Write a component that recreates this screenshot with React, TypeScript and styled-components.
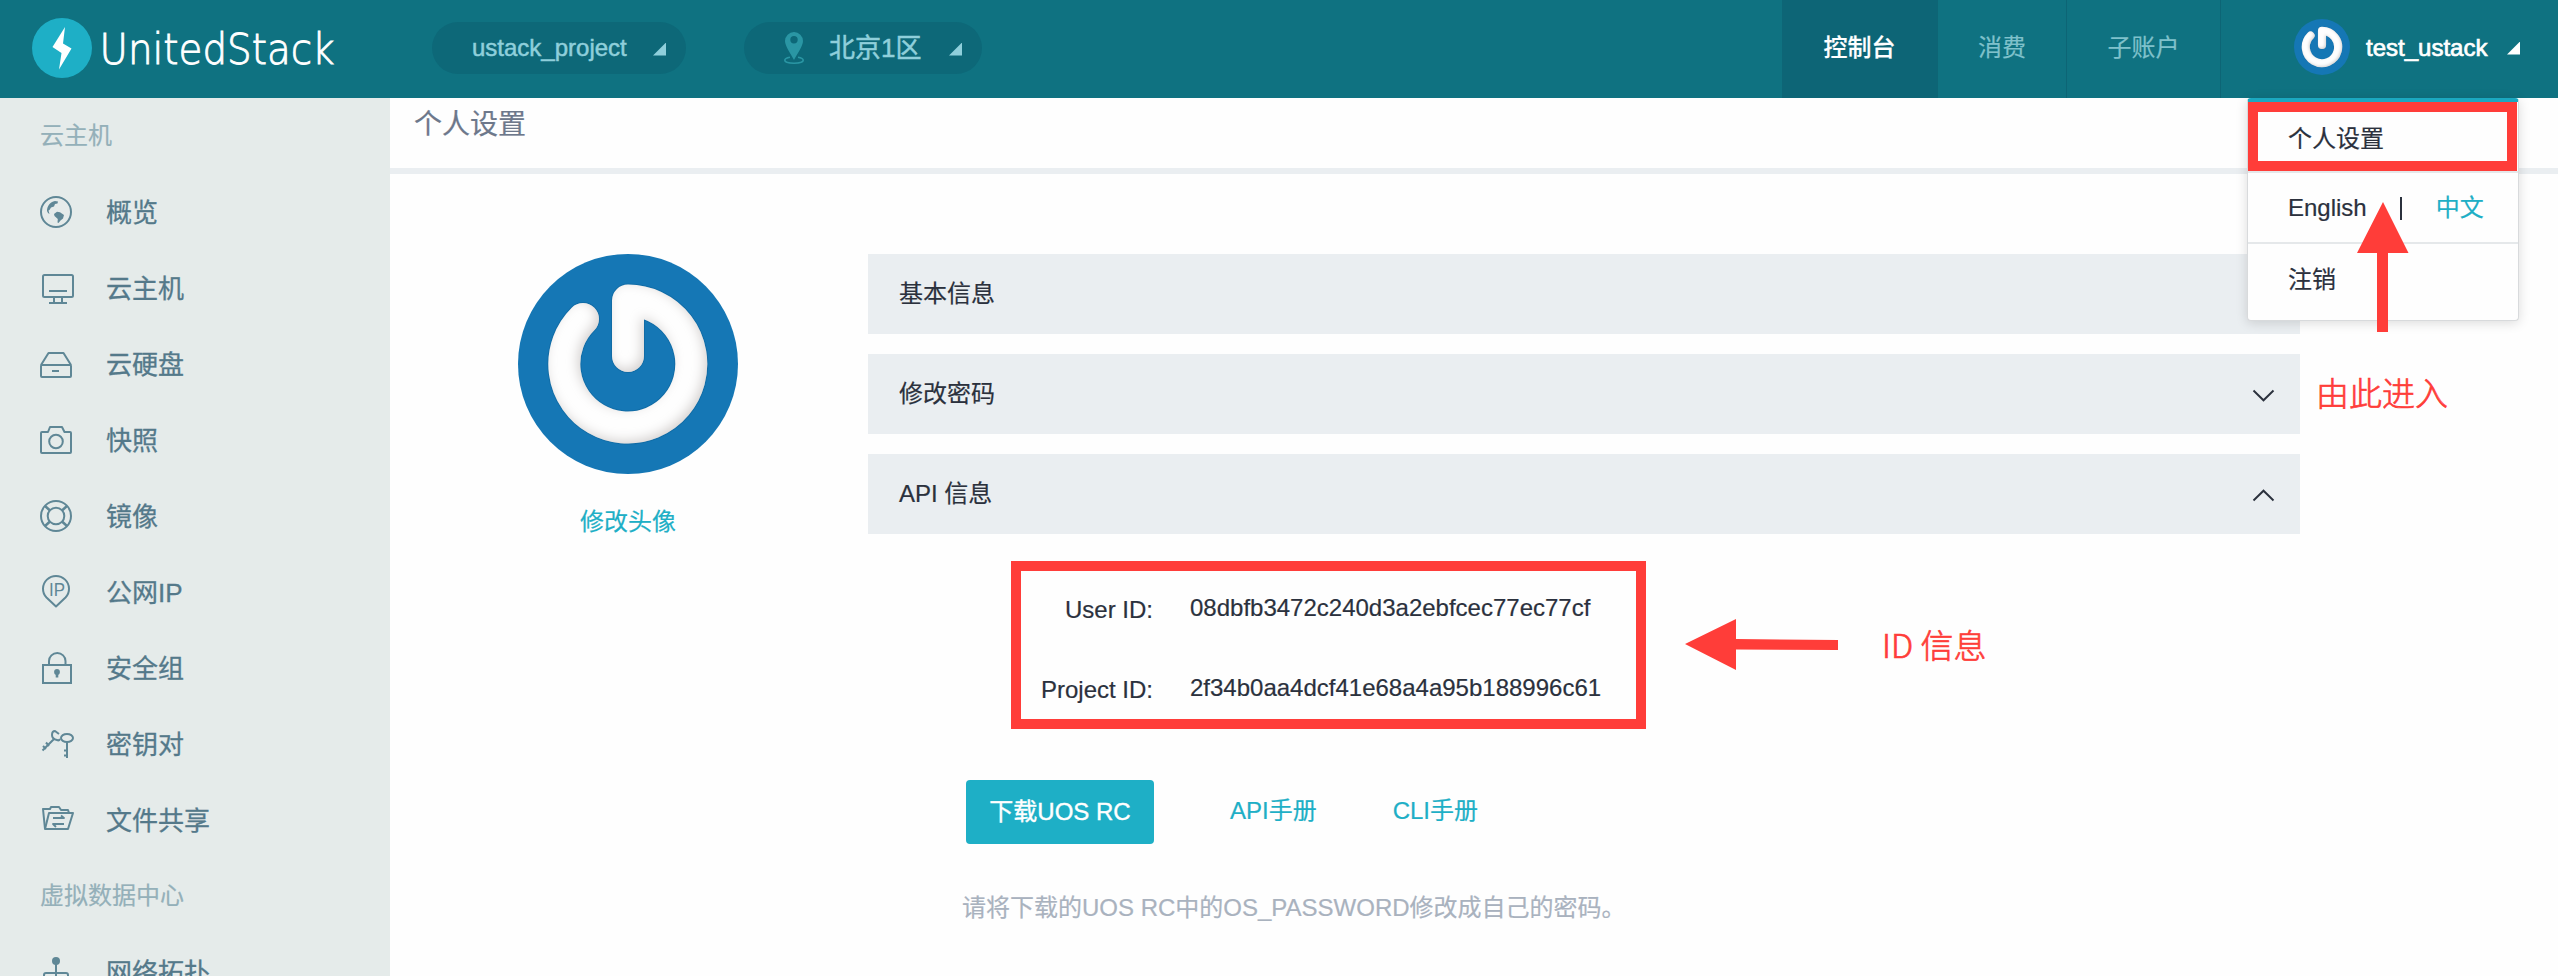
import React from "react";
import styled, { createGlobalStyle, css } from "styled-components";

const GlobalStyle = createGlobalStyle`
  * { box-sizing: border-box; }
  body {
    margin: 0;
    background: #fefefe;
    font-family: "Liberation Sans", "Noto Sans CJK SC", sans-serif;
    font-size: 24px;
    color: #2b313d;
    -webkit-text-stroke: 0.2px currentColor;
    -webkit-font-smoothing: antialiased;
  }
`;

const RED = "#ff3d39";
const TEAL = "#1eafc6";

const Page = styled.div`
  position: relative;
  display: flex;
  flex-direction: column;
  width: 2558px;
  height: 976px;
  overflow: hidden;
`;

/* ---------- header ---------- */

const Header = styled.header`
  display: flex;
  flex: none;
  height: 98px;
  padding-left: 32px;
  background: #0f7281;
`;

const Brand = styled.div`
  display: flex;
  align-items: center;
  width: 400px;
  padding-bottom: 2px;
`;

const Wordmark = styled.svg`
  display: block;
  margin-left: 8px;
  overflow: visible;
`;

const Pill = styled.button<{ $width: number; $pad: number }>`
  display: flex;
  align-items: center;
  width: ${(p) => p.$width}px;
  height: 52px;
  margin: 22px 58px 0 0;
  padding: 0 20px 0 ${(p) => p.$pad}px;
  border: 0;
  border-radius: 26px;
  background: #0d6878;
  color: #8fcfdb;
  font: inherit;
`;

const PillText = styled.span<{ $size?: number }>`
  flex: 1;
  text-align: left;
  font-size: ${(p) => p.$size ?? 24}px;
  line-height: 48px;
  padding-bottom: 1px;
  white-space: nowrap;
  -webkit-text-stroke: 0.5px currentColor;
`;

const Corner = styled.i<{ $white?: boolean }>`
  width: 13px;
  height: 13px;
  margin-top: 2px;
  background: ${(p) => (p.$white ? "#fff" : "#8fcfdb")};
  clip-path: polygon(100% 0, 100% 100%, 0 100%);
`;

const PinIcon = styled.svg`
  display: block;
  margin-right: 25px;
`;

const Nav = styled.nav`
  display: flex;
  margin-left: auto;
`;

const NavItem = styled.a<{ $width: number; $active?: boolean }>`
  width: ${(p) => p.$width}px;
  line-height: 96px;
  text-align: center;
  color: #7fc1cb;
  border-right: 1px solid #0d6575;
  ${(p) =>
    p.$active &&
    css`
      background: #0d6576;
      color: #fff;
      font-weight: 500;
    `}
`;

const Account = styled.div`
  display: flex;
  align-items: center;
  width: 337px;
  padding: 0 38px 4px 73px;
  color: #fff;
`;

const AccountName = styled.span`
  flex: 1;
  margin-left: 16px;
  padding-top: 2px;
  -webkit-text-stroke: 0.7px #fff;
`;

/* ---------- sidebar ---------- */

const Body = styled.div`
  display: flex;
  flex: 1;
  min-height: 0;
`;

const Sidebar = styled.aside`
  flex: none;
  width: 390px;
  overflow: hidden;
  background: #e5ebea;
`;

const GroupTitle = styled.h3`
  height: 76px;
  margin: 0;
  padding-left: 40px;
  font-size: 24px;
  font-weight: 400;
  line-height: 76px;
  color: #94b0b9;
`;

const MenuItem = styled.a`
  display: flex;
  align-items: center;
  height: 76px;
  padding-left: 40px;
  color: #54798a;
`;

const MenuIcon = styled.svg`
  flex: none;
  width: 36px;
  height: 36px;
  margin-right: 30px;
  fill: none;
  stroke: #5f8796;
  stroke-width: 2;
  stroke-linejoin: round;
`;

const MenuLabel = styled.span`
  padding-top: 2px;
  font-size: 26px;
  line-height: 38px;
  -webkit-text-stroke: 0.3px currentColor;
`;

/* ---------- content ---------- */

const Main = styled.main`
  flex: 1;
  min-width: 0;
`;

const Title = styled.h1`
  height: 76px;
  margin: 0;
  padding-left: 24px;
  border-bottom: 6px solid #eaeef1;
  font-size: 28px;
  font-weight: 400;
  line-height: 54px;
  color: #6d788b;
`;

const Content = styled.div`
  display: flex;
  padding: 80px 0 0 128px;
`;

const Profile = styled.div`
  display: flex;
  flex-direction: column;
  align-items: center;
  gap: 30px;
  width: 220px;
  margin-right: 130px;
`;

const TextLink = styled.a`
  color: ${TEAL};
  line-height: 36px;
`;

const Sections = styled.div`
  display: flex;
  flex-direction: column;
  gap: 20px;
  width: 1432px;
`;

const Panel = styled.div`
  display: flex;
  align-items: center;
  justify-content: space-between;
  height: 80px;
  padding: 0 25px 0 31px;
  background: #eaeef1;
`;

const PanelTitle = styled.span`
  line-height: 80px;
`;

const Chevron = styled.svg<{ $up?: boolean }>`
  display: block;
  margin-top: 2px;
  transform: ${(p) => (p.$up ? "rotate(180deg)" : "none")};
`;

const IdBox = styled.dl`
  width: 635px;
  height: 168px;
  margin: 7px 0 0 143px;
  padding: 18px 0 0;
  border: 10px solid ${RED};
`;

const IdRow = styled.div`
  display: grid;
  grid-template-columns: 132px 1fr;
  column-gap: 37px;
  height: 80px;
`;

const IdLabel = styled.dt`
  padding-top: 7px;
  text-align: right;
  line-height: 28px;
`;

const IdValue = styled.dd`
  margin: 0;
  padding-top: 5px;
  line-height: 28px;
`;

const Actions = styled.div`
  display: flex;
  align-items: center;
  gap: 76px;
  height: 64px;
  margin: 31px 0 0 98px;

  ${TextLink} {
    padding-bottom: 3px;
  }
`;

const DownloadButton = styled.button`
  width: 188px;
  height: 64px;
  padding: 0 0 5px;
  border: 0;
  border-radius: 4px;
  background: ${TEAL};
  color: #fff;
  font: inherit;
  white-space: nowrap;
  -webkit-text-stroke: 0.4px #fff;
`;

const Hint = styled.p`
  margin: 26px 0 0 94px;
  line-height: 36px;
  color: #a9b2be;
`;

/* ---------- account menu and callouts, over the page ---------- */

const Dropdown = styled.div`
  position: absolute;
  top: 98px;
  left: 2247px;
  width: 272px;
  height: 223px;
  border: 1px solid #d8dadc;
  border-top: 4px solid #1ba8c0;
  border-radius: 4px;
  background: #fefefe;
  box-shadow: 0 2px 12px rgba(0, 0, 0, 0.14);
`;

const DropRow = styled.div<{ $height: number; $last?: boolean }>`
  display: flex;
  align-items: center;
  height: ${(p) => p.$height}px;
  padding-left: 40px;
  border-bottom: ${(p) => (p.$last ? "0" : "2px solid #e5e8ea")};
`;

const Divider = styled.span`
  width: 2px;
  height: 23px;
  margin: 2px 34px 0 33px;
  background: #2b313d;
`;

const MenuFrame = styled.div`
  position: absolute;
  top: 102px;
  left: 2248px;
  width: 269px;
  height: 69px;
  border: 10px solid ${RED};
`;

const Arrow = styled.svg<{ $x: number; $y: number }>`
  position: absolute;
  left: ${(p) => p.$x}px;
  top: ${(p) => p.$y}px;
  fill: ${RED};
`;

const Note = styled.span<{ $x: number; $y: number }>`
  position: absolute;
  left: ${(p) => p.$x}px;
  top: ${(p) => p.$y}px;
  color: ${RED};
  font-family: "Noto Sans CJK SC", sans-serif;
  font-size: 33px;
  font-weight: 300;
  line-height: 40px;
  white-space: nowrap;
  -webkit-text-stroke: 0.7px ${RED};
`;

const Avatar = ({ size, id }: { size: number; id: string }) => (
  <svg width={size} height={size} viewBox="0 0 220 220">
    <defs>
      <filter id={id} filterUnits="userSpaceOnUse" x="0" y="0" width="220" height="220">
        <feGaussianBlur in="SourceAlpha" stdDeviation="6" result="b" />
        <feOffset in="b" dx="-3" dy="-3" result="o" />
        <feComposite in="SourceAlpha" in2="o" operator="out" result="edge" />
        <feFlood floodColor="#9a8d88" floodOpacity="0.5" />
        <feComposite in2="edge" operator="in" result="shade" />
        <feMerge>
          <feMergeNode in="SourceGraphic" />
          <feMergeNode in="shade" />
        </feMerge>
      </filter>
    </defs>
    <circle cx="110" cy="110" r="110" fill="#1577b5" />
    <path
      d="M65 65 A63.500 63.500 0 1 0 110 46.500 V102"
      fill="none"
      stroke="#0c5c90"
      strokeOpacity="0.4"
      strokeWidth="34"
      strokeLinecap="round"
      strokeLinejoin="round"
    />
    <path
      d="M65 65 A63.500 63.500 0 1 0 110 46.500 V102"
      fill="none"
      stroke="#fefefe"
      strokeWidth="32"
      strokeLinecap="round"
      strokeLinejoin="round"
      filter={`url(#${id})`}
    />
  </svg>
);

const icons: Record<string, React.ReactNode> = {
  globe: (
    <>
      <circle cx="16" cy="18" r="15" />
      <g fill="#5f8796" stroke="none">
        <path d="M7 17C7 12 10 8 15 7L18 7.500L17.500 9.500L15 10L14 12.500L11 13.500L9.500 16L8.500 16.500L9.500 20L8 19Z" />
        <path d="M14 20L17 17.800L20 18.300L24 21L23 24.500L20.500 26.500L18.500 29L17.500 28.500L17.800 25L14.500 22Z" />
      </g>
    </>
  ),
  host: (
    <>
      <rect x="3" y="5" width="30" height="22" rx="1.500" />
      <path d="M9 21H27M14 27V33M22 27V33M9 33H27" />
    </>
  ),
  disk: (
    <>
      <path d="M1 19L8.500 7H23.500L31 19" />
      <rect x="1" y="19" width="30" height="12" rx="1" />
      <path d="M12 25H19" />
    </>
  ),
  camera: (
    <>
      <path d="M2 10H8L10 5H22L24.500 10H30Q31 10 31 11V30Q31 31 30 31H2Q1 31 1 30V11Q1 10 2 10Z" />
      <circle cx="16" cy="19.500" r="6.800" />
    </>
  ),
  image: (
    <>
      <circle cx="16" cy="18" r="15" />
      <circle cx="16" cy="18" r="8.300" />
      <path d="M5 8L10 12.500M27 8L22 12.500M5 28L10 23.500M27 28L22 23.500" strokeWidth="2.500" />
    </>
  ),
  ip: (
    <>
      <path d="M16 32.500L6.500 23.500A13 12.800 0 1 1 25.500 23.500Z" />
      <text
        x="9"
        y="21.500"
        fill="#5f8796"
        stroke="none"
        fontSize="17.500"
        fontFamily="Liberation Sans"
        textLength="16"
        lengthAdjust="spacingAndGlyphs"
      >
        IP
      </text>
    </>
  ),
  lock: (
    <>
      <path d="M3 15H31V33H3Z" strokeLinejoin="miter" />
      <path d="M9 15V11A8.250 8 0 0 1 25.500 11V15" />
      <circle cx="17" cy="22" r="2.900" fill="#5f8796" stroke="none" />
      <path d="M17 22V27.500" strokeWidth="2.600" />
    </>
  ),
  keys: (
    <>
      <ellipse cx="27" cy="12" rx="6" ry="4" />
      <path d="M27 16V32M24 24.500H27M24 29.500H27" />
      <path d="M19 8L15 5Q12 5 12 9T17 14Q19 15 20 13M14 13L2.500 24.500M6 16.500L9 20M3 20L6 23" />
    </>
  ),
  share: (
    <>
      <path d="M5 27L3 7H10L11 5H19L21 8H28L29 11" />
      <path d="M9 11H33L28 27H5Z" />
      <path d="M13 16H24L21 13.500M24 22H13L16 25" strokeWidth="1.800" />
    </>
  ),
  topology: (
    <>
      <circle cx="16" cy="7" r="4" fill="#5f8796" stroke="none" />
      <path d="M16 7V32M4 32V21Q4 19 6 19H26Q28 19 28 21V32" />
    </>
  ),
};

const menu = [
  ["globe", "概览"],
  ["host", "云主机"],
  ["disk", "云硬盘"],
  ["camera", "快照"],
  ["image", "镜像"],
  ["ip", "公网IP"],
  ["lock", "安全组"],
  ["keys", "密钥对"],
  ["share", "文件共享"],
];

const Entry = ({ icon, label }: { icon: string; label: string }) => (
  <MenuItem>
    <MenuIcon viewBox="0 0 36 36">{icons[icon]}</MenuIcon>
    <MenuLabel>{label}</MenuLabel>
  </MenuItem>
);

const Section = ({ title, open }: { title: string; open?: boolean }) => (
  <Panel>
    <PanelTitle>{title}</PanelTitle>
    <Chevron $up={open} width="23" height="13" viewBox="0 0 23 13">
      <path d="M1.500 1.500L11.500 11.300L21.500 1.500" fill="none" stroke="#2b313d" strokeWidth="1.900" />
    </Chevron>
  </Panel>
);

export default function App() {
  return (
    <Page>
      <GlobalStyle />
      <Header>
        <Brand>
          <svg width="60" height="60" viewBox="0 0 60 60">
            <circle cx="30" cy="30" r="30" fill={TEAL} />
            <path d="M33 9L20.500 29L29.500 35L27 51.500L39.500 30.500L31 25.500Z" fill="#fff" />
          </svg>
          <Wordmark width="240" height="60">
            <text
              x="-0.500"
              y="46"
              fill="#fff"
              stroke="#fff"
              strokeWidth="0.900"
              fontFamily="DejaVu Sans"
              fontWeight="200"
              fontSize="42"
              textLength="235"
              lengthAdjust="spacingAndGlyphs"
            >
              UnitedStack
            </text>
          </Wordmark>
        </Brand>
        <Pill $width={254} $pad={40}>
          <PillText>ustack_project</PillText>
          <Corner />
        </Pill>
        <Pill $width={238} $pad={40}>
          <PinIcon width="20" height="33" viewBox="0 0 20 33">
            <path
              fill="#2a96a4"
              fillRule="evenodd"
              d="M10 0A9 9 0 0 1 19 9C19 14 13 22 10 28C7 22 1 14 1 9A9 9 0 0 1 10 0ZM10 4A3.700 3.700 0 1 0 10 11.400A3.700 3.700 0 1 0 10 4Z"
            />
            <path
              d="M6 25.300C3 25.800 .8 27 .8 28.300C.8 30 5 31.300 10 31.300S19.200 30 19.200 28.300C19.200 27 17 25.800 14 25.300"
              fill="none"
              stroke="#2a96a4"
              strokeWidth="1.600"
            />
          </PinIcon>
          <PillText $size={26}>北京1区</PillText>
          <Corner />
        </Pill>
        <Nav>
          <NavItem $width={156} $active>控制台</NavItem>
          <NavItem $width={129}>消费</NavItem>
          <NavItem $width={154}>子账户</NavItem>
        </Nav>
        <Account>
          <Avatar size={56} id="shade-small" />
          <AccountName>test_ustack</AccountName>
          <Corner $white />
        </Account>
      </Header>

      <Body>
        <Sidebar>
          <GroupTitle>云主机</GroupTitle>
          {menu.map(([icon, label]) => (
            <Entry key={icon} icon={icon} label={label} />
          ))}
          <GroupTitle>虚拟数据中心</GroupTitle>
          <Entry icon="topology" label="网络拓扑" />
        </Sidebar>

        <Main>
          <Title>个人设置</Title>
          <Content>
            <Profile>
              <Avatar size={220} id="shade-large" />
              <TextLink>修改头像</TextLink>
            </Profile>
            <Sections>
              <Section title="基本信息" />
              <Section title="修改密码" />
              <Section title="API 信息" open />
              <IdBox>
                <IdRow>
                  <IdLabel>User ID:</IdLabel>
                  <IdValue>08dbfb3472c240d3a2ebfcec77ec77cf</IdValue>
                </IdRow>
                <IdRow>
                  <IdLabel>Project ID:</IdLabel>
                  <IdValue>2f34b0aa4dcf41e68a4a95b188996c61</IdValue>
                </IdRow>
              </IdBox>
              <Actions>
                <DownloadButton>下载UOS RC</DownloadButton>
                <TextLink>API手册</TextLink>
                <TextLink>CLI手册</TextLink>
              </Actions>
              <Hint>请将下载的UOS RC中的OS_PASSWORD修改成自己的密码。</Hint>
            </Sections>
          </Content>
        </Main>
      </Body>

      <Dropdown>
        <DropRow $height={71}>个人设置</DropRow>
        <DropRow $height={71}>
          English
          <Divider />
          <TextLink>中文</TextLink>
        </DropRow>
        <DropRow $height={66} $last>注销</DropRow>
      </Dropdown>
      <MenuFrame />
      <Arrow $x={2357} $y={202} width="52" height="130">
        <path d="M26 0L51.500 51H31V130H20V51H0Z" />
      </Arrow>
      <Note $x={2316} $y={372}>由此进入</Note>
      <Arrow $x={1685} $y={618} width="153" height="53">
        <path d="M0 26L51 1V21L153 22V32L51 31.500V52Z" />
      </Arrow>
      <Note $x={1882} $y={624}>ID 信息</Note>
    </Page>
  );
}
